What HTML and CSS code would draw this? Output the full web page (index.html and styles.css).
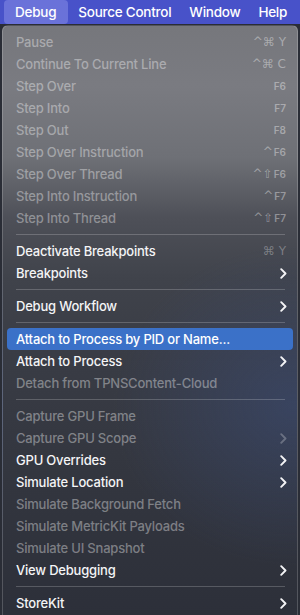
FILE: index.html
```html
<!DOCTYPE html>
<html lang="en">
<head>
  <meta charset="UTF-8" />
  <title>Debug menu</title>
  <link rel="stylesheet" href="styles.css">
</head>
<body>
  <div class="menubar">
    <span class="menubar-item active">Debug</span>
    <span class="menubar-item">Source Control</span>
    <span class="menubar-item">Window</span>
    <span class="menubar-item">Help</span>
  </div>

  <div class="menu">
    <div class="menu-item disabled"><span>Pause</span><span class="key">^⌘ Y</span></div>
    <div class="menu-item disabled"><span>Continue To Current Line</span><span class="key">^⌘ C</span></div>
    <div class="menu-item disabled"><span>Step Over</span><span class="key fkey">F6</span></div>
    <div class="menu-item disabled"><span>Step Into</span><span class="key fkey">F7</span></div>
    <div class="menu-item disabled"><span>Step Out</span><span class="key fkey">F8</span></div>
    <div class="menu-item disabled"><span>Step Over Instruction</span><span class="key">^<small>F6</small></span></div>
    <div class="menu-item disabled"><span>Step Over Thread</span><span class="key">^⇧<small>F6</small></span></div>
    <div class="menu-item disabled"><span>Step Into Instruction</span><span class="key">^<small>F7</small></span></div>
    <div class="menu-item disabled"><span>Step Into Thread</span><span class="key">^⇧<small>F7</small></span></div>
    <div class="separator"></div>
    <div class="menu-item"><span>Deactivate Breakpoints</span><span class="key dim">⌘ Y</span></div>
    <div class="menu-item"><span>Breakpoints</span><svg class="chevron" viewBox="0 0 7 11"><polyline points="1.2,1.2 5.5,5.5 1.2,9.8"/></svg></div>
    <div class="separator"></div>
    <div class="menu-item"><span>Debug Workflow</span><svg class="chevron" viewBox="0 0 7 11"><polyline points="1.2,1.2 5.5,5.5 1.2,9.8"/></svg></div>
    <div class="separator"></div>
    <div class="menu-item selected"><span>Attach to Process by PID or Name...</span></div>
    <div class="menu-item"><span>Attach to Process</span><svg class="chevron" viewBox="0 0 7 11"><polyline points="1.2,1.2 5.5,5.5 1.2,9.8"/></svg></div>
    <div class="menu-item disabled"><span>Detach from TPNSContent-Cloud</span></div>
    <div class="separator"></div>
    <div class="menu-item disabled"><span>Capture GPU Frame</span></div>
    <div class="menu-item disabled"><span>Capture GPU Scope</span><svg class="chevron" viewBox="0 0 7 11"><polyline points="1.2,1.2 5.5,5.5 1.2,9.8"/></svg></div>
    <div class="menu-item"><span>GPU Overrides</span><svg class="chevron" viewBox="0 0 7 11"><polyline points="1.2,1.2 5.5,5.5 1.2,9.8"/></svg></div>
    <div class="menu-item"><span>Simulate Location</span><svg class="chevron" viewBox="0 0 7 11"><polyline points="1.2,1.2 5.5,5.5 1.2,9.8"/></svg></div>
    <div class="menu-item disabled"><span>Simulate Background Fetch</span></div>
    <div class="menu-item disabled"><span>Simulate MetricKit Payloads</span></div>
    <div class="menu-item disabled"><span>Simulate UI Snapshot</span></div>
    <div class="menu-item"><span>View Debugging</span><svg class="chevron" viewBox="0 0 7 11"><polyline points="1.2,1.2 5.5,5.5 1.2,9.8"/></svg></div>
    <div class="separator"></div>
    <div class="menu-item"><span>StoreKit</span><svg class="chevron" viewBox="0 0 7 11"><polyline points="1.2,1.2 5.5,5.5 1.2,9.8"/></svg></div>
  </div>
</body>
</html>
```

FILE: styles.css
```css
:root {
  --bar: #4852c9;
  --bar-active: #6a72d9;
  --text: #f4f4f6;
  --muted: rgba(255, 255, 255, 0.38);
  --select: #3b71c8;
  --line: rgba(255, 255, 255, 0.2);
}

* {
  box-sizing: border-box;
  margin: 0;
  padding: 0;
}

body {
  width: 300px;
  height: 615px;
  overflow: hidden;
  background: #2a2d36;
  font-family: Inter, "Open Sans", sans-serif;
  font-size: 13px;
  color: var(--text);
}

.menubar {
  height: 24px;
  background: var(--bar);
  display: flex;
  align-items: stretch;
  padding-left: 4px;
  white-space: nowrap;
}

.menubar-item {
  display: flex;
  align-items: center;
  padding: 0 9px;
  font-size: 13.5px;
  font-weight: 500;
  letter-spacing: -0.25px;
  color: #fff;
  border-radius: 4px;
}

.menubar-item.active {
  background: var(--bar-active);
  padding: 0 12px 0 11px;
  margin-right: 1px;
}

.menu {
  margin: 1px 2px 0 2px;
  height: 600px;
  padding: 5px 4px 0 4px;
  border-radius: 6px 6px 0 0;
  border: 1px solid rgba(255, 255, 255, 0.18);
  border-bottom: none;
  background:
    radial-gradient(ellipse 180px 160px at 290px 380px, rgba(60, 80, 130, 0.45), transparent),
    linear-gradient(180deg, #76777c 0%, #7a7b81 10%, #6e7076 22%, #4e5058 32%, #40434b 42%, #393c45 55%, #33363f 75%, #2c2f39 100%);
}

.menu-item {
  height: 22px;
  display: flex;
  align-items: center;
  justify-content: space-between;
  padding: 0 10px 0 9px;
  border-radius: 4px;
  font-weight: 500;
  letter-spacing: -0.2px;
  white-space: nowrap;
}

.menu-item.disabled {
  color: var(--muted);
}

.menu-item.selected {
  background: var(--select);
  color: #fff;
}

.key {
  margin-right: -3px;
  font-family: "DejaVu Sans", sans-serif;
  font-size: 12px;
  letter-spacing: 0;
  color: var(--muted);
}

.key.dim {
  color: rgba(255, 255, 255, 0.3);
}

.fkey,
.key small {
  font-family: Inter, sans-serif;
  font-size: 10px;
  font-weight: 600;
  margin-left: 1px;
}

.chevron {
  width: 7px;
  height: 11px;
  margin-right: -4px;
  fill: none;
  stroke: var(--text);
  stroke-width: 1.9;
  stroke-linecap: round;
  stroke-linejoin: round;
}

.menu-item.disabled .chevron {
  stroke: rgba(255, 255, 255, 0.25);
}

.separator {
  height: 1px;
  margin: 5px 8px 5px 9px;
  background: var(--line);
}
```
